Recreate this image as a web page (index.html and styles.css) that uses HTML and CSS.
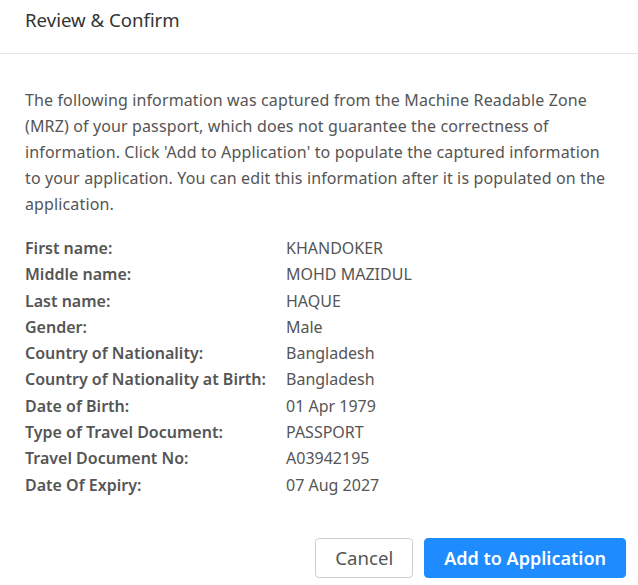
FILE: index.html
```html
<!DOCTYPE html>
<html lang="en">
<head>
<meta charset="utf-8">
<title>Review &amp; Confirm</title>
<link rel="stylesheet" href="styles.css">
</head>
<body>
<div class="modal">
  <div class="modal-header">Review &amp; Confirm</div>
  <div class="modal-body">
    <p class="intro">The following information was captured from the Machine Readable Zone (MRZ) of your passport, which does not guarantee the correctness of information. Click 'Add to Application' to populate the captured information to your application. You can edit this information after it is populated on the application.</p>
    <dl class="details">
      <dt>First name:</dt><dd>KHANDOKER</dd>
      <dt>Middle name:</dt><dd>MOHD MAZIDUL</dd>
      <dt>Last name:</dt><dd>HAQUE</dd>
      <dt>Gender:</dt><dd>Male</dd>
      <dt>Country of Nationality:</dt><dd>Bangladesh</dd>
      <dt>Country of Nationality at Birth:</dt><dd>Bangladesh</dd>
      <dt>Date of Birth:</dt><dd>01 Apr 1979</dd>
      <dt>Type of Travel Document:</dt><dd>PASSPORT</dd>
      <dt>Travel Document No:</dt><dd>A03942195</dd>
      <dt>Date Of Expiry:</dt><dd>07 Aug 2027</dd>
    </dl>
  </div>
  <div class="modal-footer">
    <button class="btn btn-default">Cancel</button>
    <button class="btn btn-primary">Add to Application</button>
  </div>
</div>
</body>
</html>
```
FILE: styles.css
```css
html, body {
  margin: 0;
  padding: 0;
  background: #ffffff;
}
body {
  font-family: "Noto Sans", "DejaVu Sans", sans-serif;
  color: #555555;
  width: 638px;
}
.modal {
  width: 638px;
}
.modal-header {
  height: 54px;
  box-sizing: border-box;
  padding: 7px 25px 0;
  font-size: 18.6px;
  line-height: 26px;
  color: #333333;
  border-bottom: 1px solid #e5e5e5;
}
.modal-body {
  padding: 33px 25px 0;
}
.intro {
  margin: 0 0 18px;
  font-size: 16px;
  line-height: 26px;
  letter-spacing: 0.13px;
}
.details {
  display: grid;
  grid-template-columns: 261px 1fr;
  margin: 0;
  font-size: 16px;
  line-height: 26.3px;
}
.details dt {
  font-weight: 600;
  margin: 0;
}
.details dd {
  margin: 0;
}
.modal-footer {
  display: flex;
  justify-content: flex-end;
  gap: 11px;
  padding: 40px 12px 0 0;
}
.btn {
  font-family: inherit;
  font-size: 18px;
  height: 40px;
  border-radius: 4px;
  padding: 0 19px;
  cursor: pointer;
}
.btn-default {
  background: #ffffff;
  border: 1px solid #d0d0d0;
  color: #555555;
  font-size: 18.6px;
  padding: 0 19px;
}
.btn-primary {
  background: #1e8cff;
  border: 1px solid #1e8cff;
  color: #ffffff;
  font-weight: 600;
}
```
